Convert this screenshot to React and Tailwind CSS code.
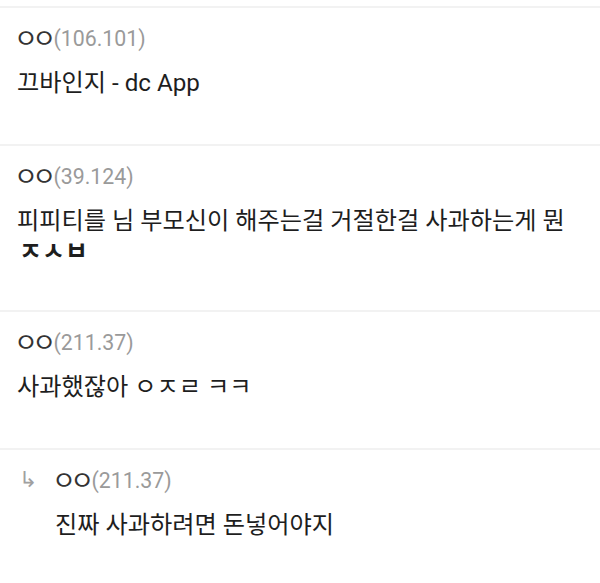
import React from "react";

const comments = [
  { ip: "106.101", lines: ["끄바인지 - dc App"] },
  {
    ip: "39.124",
    lines: [
      "피피티를 님 부모신이 해주는걸 거절한걸 사과하는게 뭔",
      <span className="pl-[2px] text-[25px] font-bold align-[-3px]">ㅈㅅㅂ</span>,
    ],
  },
  { ip: "211.37", lines: ["사과했잖아 ㅇㅈㄹ ㅋㅋ"] },
  { ip: "211.37", lines: ["진짜 사과하려면 돈넣어야지"], reply: true },
];

function Comment({ c }) {
  return (
    <div className="border-t-2 border-[#f2f2f2] pl-[17px] pt-[16px] pb-[47px]">
      <div className="flex">
        {c.reply && (
          <span className="w-[38px] shrink-0 pl-[2px] text-[22px] leading-[28px] text-[#a0a0a0]">↳</span>
        )}
        <div className="flex-1">
          <div className="h-[30px] text-[21.3px] leading-[30px] whitespace-nowrap">
            <span className="ml-[-3px] mr-[3px] text-[26px] leading-none tracking-[-5.7px] align-[-2px] text-[#333]">ㅇㅇ</span>
            <span className="text-[#9a9a9a]">({c.ip})</span>
          </div>
          <div className="mt-[15px] text-[24.2px] leading-[28px] text-[#1e1e1e]">
            {c.lines.map(function (l, i) {
              return <div key={i} className="h-[28px] whitespace-nowrap">{l}</div>;
            })}
          </div>
        </div>
      </div>
    </div>
  );
}

export default function App() {
  return (
    <div
      className="w-[600px] h-[583px] overflow-hidden bg-white pt-[6px]"
      style={{ fontFamily: 'Roboto, "Noto Sans CJK KR", sans-serif' }}
    >
      {comments.map(function (c, i) {
        return <Comment key={i} c={c} />;
      })}
    </div>
  );
}
